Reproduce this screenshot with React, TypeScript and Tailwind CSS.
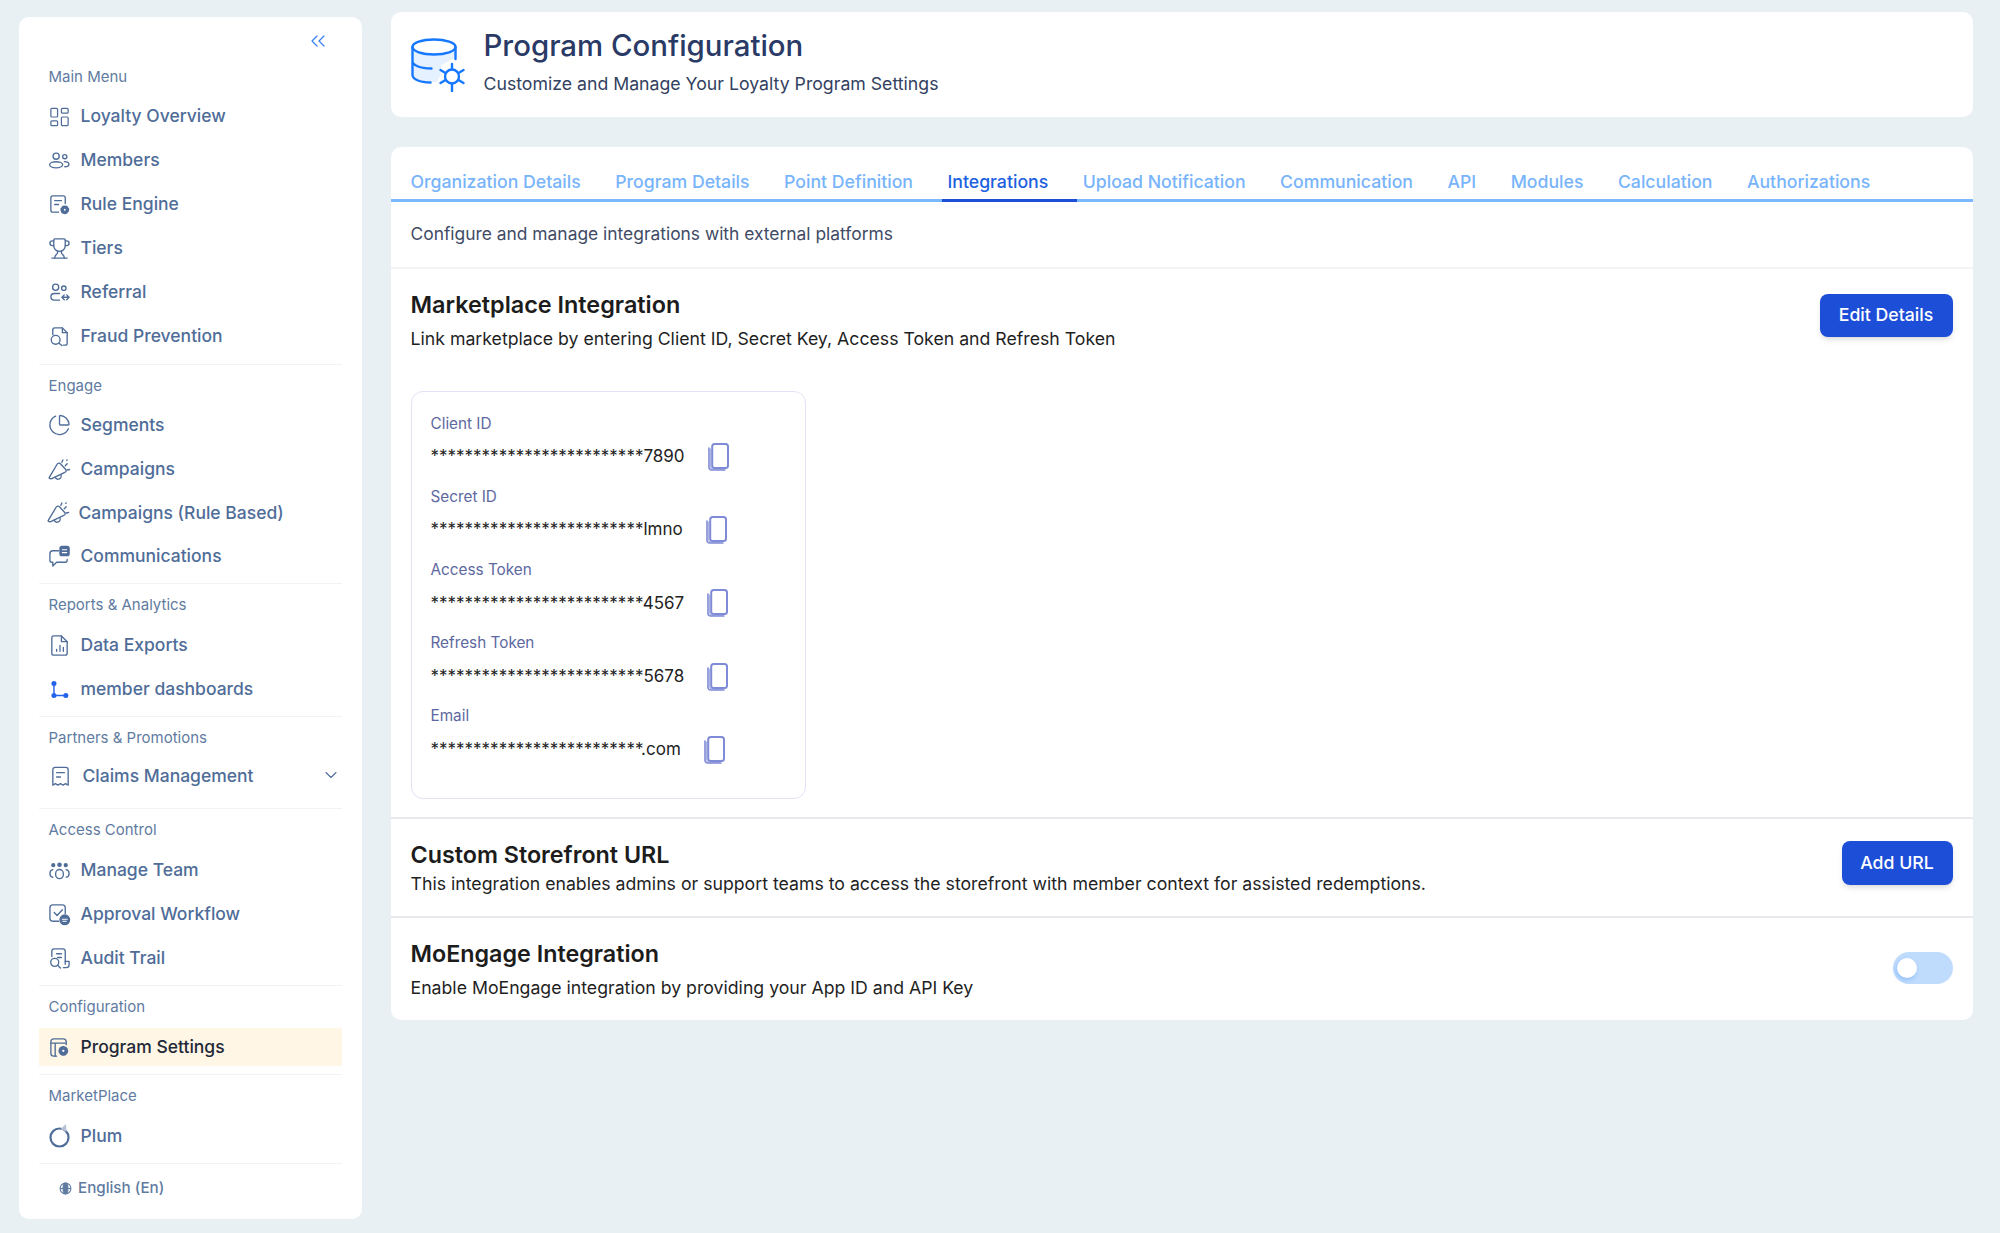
import type { ReactNode } from "react";
import { ChevronDown, ChevronsLeft, LayoutDashboard, PieChart, Trophy } from "lucide-react";

function Ico({ children, className = "" }: { children: ReactNode; className?: string }) {
  return (
    <svg
      viewBox="0 0 24 24"
      fill="none"
      stroke="currentColor"
      strokeWidth={1.4}
      strokeLinecap="round"
      strokeLinejoin="round"
      className={`h-[23px] w-[23px] shrink-0 ${className}`}
    >
      {children}
    </svg>
  );
}

const icons: Record<string, ReactNode> = {
  overview: <LayoutDashboard className="h-[24px] w-[24px]" strokeWidth={1.3} />,
  members: (
    <Ico>
      <circle cx="8.500" cy="7.500" r="3.200" />
      <circle cx="17.500" cy="8" r="2.200" />
      <ellipse cx="8.500" cy="16.500" rx="6.800" ry="3.200" />
      <path d="M17 13.200c2.700 0 4.800 1 4.800 2.600S19.700 18.500 17.500 18.500" />
    </Ico>
  ),
  rules: (
    <Ico>
      <path d="M11 20H5a2 2 0 0 1-2-2V5a2 2 0 0 1 2-2h11a2 2 0 0 1 2 2v6" />
      <path d="M7 8h7M7 12h4" />
      <circle cx="17.500" cy="17.500" r="3.600" fill="currentColor" strokeWidth={2} strokeDasharray="2 1.500" />
      <circle cx="17.500" cy="17.500" r="1" fill="white" stroke="none" />
    </Ico>
  ),
  tiers: <Trophy className="h-[23px] w-[23px]" strokeWidth={1.4} />,
  referral: (
    <Ico>
      <circle cx="8" cy="6.500" r="3.200" />
      <circle cx="16.500" cy="7.500" r="2.300" />
      <path d="M12 20H6.500a3.500 3.500 0 0 1 0-7H12" />
      <path d="M15 17h7M19.500 14.500 22 17l-2.500 2.500M17 14.500 14.500 17l2.500 2.500" />
    </Ico>
  ),
  fraud: (
    <Ico>
      <path d="M5 10V5a2 2 0 0 1 2-2h8l5 5v11a2 2 0 0 1-2 2h-2" />
      <path d="M15 3v5h5" />
      <circle cx="8" cy="15.500" r="4.600" />
      <path d="m11.500 19 3 2.500" />
    </Ico>
  ),
  segments: <PieChart className="h-[24px] w-[24px]" strokeWidth={1.4} />,
  campaigns: (
    <Ico>
      <path d="M1.500 20 9.500 6.500c1-1.500 2.500-1.500 3.500-.5l5.500 6c1 1 .5 2.500-1 3L4 21.500c-2 .5-3.500-.5-2.500-1.500z" />
      <path d="M7.500 20a3.200 3.200 0 0 0 6-2.500" />
      <path d="M14.500 4.500l1-2.500M18 8l2-2M20 12.500l2.500-.5M19.500 2.500l.5-.5" />
    </Ico>
  ),
  comms: (
    <Ico>
      <path d="M11 6H5a3 3 0 0 0-3 3v7a2 2 0 0 0 2 2h1v4l4-4h9a2 2 0 0 0 2-2v-1" />
      <rect x="12.500" y="1.500" width="9.500" height="9.500" rx="2" fill="currentColor" />
      <path d="M15 5h4.500M15 8h4.500" stroke="white" strokeWidth={1.200} />
    </Ico>
  ),
  exports: (
    <Ico>
      <path d="M14 2H6a2 2 0 0 0-2 2v16a2 2 0 0 0 2 2h12a2 2 0 0 0 2-2V8z" />
      <path d="M14 2v6h6" />
      <path d="M9 18v-2M12.500 18v-6M16 18v-4" />
    </Ico>
  ),
  dashboards: (
    <svg viewBox="0 0 24 24" className="h-[19px] w-[19px] shrink-0 text-[#2563eb]" fill="currentColor" stroke="currentColor">
      <circle cx="5" cy="4.500" r="3.200" stroke="none" />
      <circle cx="5" cy="19.500" r="3.200" stroke="none" />
      <circle cx="20" cy="19.500" r="3.200" stroke="none" />
      <path d="M5 4.500V19.500H20" strokeWidth={1.800} fill="none" />
    </svg>
  ),
  claims: (
    <Ico>
      <path d="M4 21V5a2.500 2.500 0 0 1 2.500-2.500h11A2.500 2.500 0 0 1 20 5v16l-2.700-1.500L14.700 21 12 19.500 9.300 21l-2.600-1.500z" />
      <path d="M8 8h8M8 12.500h4" />
    </Ico>
  ),
  team: (
    <Ico>
      <rect x="8" y="11" width="8" height="9.500" rx="4" />
      <circle cx="12" cy="6" r="1.700" fill="currentColor" />
      <circle cx="5.500" cy="6.500" r="1.500" fill="currentColor" />
      <circle cx="18.500" cy="6.500" r="1.500" fill="currentColor" />
      <path d="M5 11c-2 .5-3 2-3 4s1 3.500 3 4M19 11c2 .5 3 2 3 4s-1 3.500-3 4" />
    </Ico>
  ),
  approval: (
    <Ico>
      <path d="M11 19H5a3 3 0 0 1-3-3V5a3 3 0 0 1 3-3h10a3 3 0 0 1 3 3v6" />
      <path d="m6.500 10 3 3 5.500-6" />
      <circle cx="17.500" cy="17.500" r="5" fill="currentColor" />
      <path d="M15 17h5M15.500 19h3.500" stroke="white" strokeWidth={1.200} />
    </Ico>
  ),
  audit: (
    <Ico>
      <path d="M4 10V4.500A2.500 2.500 0 0 1 6.500 2h9A2.500 2.500 0 0 1 18 4.500V18" />
      <path d="M9 7h5M10 11h4" />
      <circle cx="7" cy="16" r="4.200" />
      <path d="m10 19 3 3" />
      <path d="M18 15h4v3.500a3 3 0 0 1-3 3h-3" />
    </Ico>
  ),
  settings: (
    <Ico>
      <path d="M9 21H6a3 3 0 0 1-3-3V6a3 3 0 0 1 3-3h10a3 3 0 0 1 3 3v3" />
      <path d="M3 7.500h16M7.500 21V8" />
      <circle cx="16" cy="15.500" r="4" fill="currentColor" strokeWidth={2.200} strokeDasharray="2 1.500" />
      <circle cx="16" cy="15.500" r="1.200" fill="white" stroke="none" />
    </Ico>
  ),
  plum: (
    <svg viewBox="0 0 24 24" className="h-[24px] w-[24px] shrink-0" fill="none">
      <circle cx="11.500" cy="13.500" r="9" stroke="currentColor" strokeWidth={2.200} />
      <path d="M12.500 5 18 0l.5 8z" fill="#b6c2d4" />
    </svg>
  ),
};

type Item = { label: string; icon: string; tight?: boolean };

function NavRow({ item, rowClass }: { item: Item; rowClass: string }) {
  return (
    <a className={`flex items-center pl-[9px] text-[17.500px] font-medium text-[#4f6d98] ${rowClass}`}>
      <span className={`flex w-[23px] justify-center ${item.tight ? "-translate-x-[1px]" : ""}`}>{icons[item.icon]}</span>
      <span className={item.tight ? "ml-[7.500px]" : "ml-[9.500px]"}>{item.label}</span>
    </a>
  );
}

function Section({
  label,
  items,
  first,
  rowClass = "h-[44px]",
}: {
  label: string;
  items: Item[];
  first?: boolean;
  rowClass?: string;
}) {
  return (
    <section className={`border-b border-[#f1f3f6] pb-[5px] ${first ? "" : "pt-[11px]"}`}>
      <h3 className="mb-[8px] h-[20px] pl-[9.500px] text-[15px] leading-[20px] text-[#5f7ba1]">{label}</h3>
      {items.map((item) => (
        <NavRow key={item.label} item={item} rowClass={rowClass} />
      ))}
    </section>
  );
}

function Sidebar() {
  return (
    <aside className="flex h-[1202px] w-[343px] shrink-0 flex-col rounded-[10px] bg-white px-[20px]">
      <div className="flex h-[49.500px] shrink-0 items-start justify-end pt-[12px] pr-[12px] text-[#3b82f6]">
        <ChevronsLeft className="h-[24px] w-[24px]" strokeWidth={1.300} />
      </div>
      <Section
        first
        label="Main Menu"
        items={[
          { label: "Loyalty Overview", icon: "overview" },
          { label: "Members", icon: "members" },
          { label: "Rule Engine", icon: "rules" },
          { label: "Tiers", icon: "tiers" },
          { label: "Referral", icon: "referral" },
          { label: "Fraud Prevention", icon: "fraud" },
        ]}
      />
      <Section
        label="Engage"
        rowClass="h-[43.700px]"
        items={[
          { label: "Segments", icon: "segments" },
          { label: "Campaigns", icon: "campaigns" },
          { label: "Campaigns (Rule Based)", icon: "campaigns", tight: true },
          { label: "Communications", icon: "comms" },
        ]}
      />
      <Section
        label="Reports & Analytics"
        items={[
          { label: "Data Exports", icon: "exports" },
          { label: "member dashboards", icon: "dashboards" },
        ]}
      />

      <section className="h-[92px] border-b border-[#f1f3f6] pt-[11px]">
        <h3 className="mb-[6px] h-[20px] pl-[9.500px] text-[15px] leading-[20px] text-[#5f7ba1]">Partners &amp; Promotions</h3>
        <div className="flex h-[44px] items-center pl-[10px] text-[17.500px] font-medium text-[#4f6d98]">
          <span className="flex w-[23px] justify-center">{icons.claims}</span>
          <span className="ml-[10.500px] flex-1">Claims Management</span>
          <ChevronDown className="mr-[1px] mb-[3px] h-[20px] w-[20px]" strokeWidth={1.300} />
        </div>
      </section>

      <Section
        label="Access Control"
        items={[
          { label: "Manage Team", icon: "team" },
          { label: "Approval Workflow", icon: "approval" },
          { label: "Audit Trail", icon: "audit" },
        ]}
      />

      <section className="h-[89px] border-b border-[#f1f3f6] pt-[11px]">
        <h3 className="mb-[11px] h-[20px] pl-[9.500px] text-[15px] leading-[20px] text-[#5f7ba1]">Configuration</h3>
        <div className="flex h-[38px] items-center bg-[#fff6e5] pl-[9px] text-[17.500px] font-medium text-[#1f2937]">
          <span className="flex w-[23px] justify-center text-[#4f6d98]">{icons.settings}</span>
          <span className="ml-[9.500px]">Program Settings</span>
        </div>
      </section>

      <Section label="MarketPlace" items={[{ label: "Plum", icon: "plum" }]} />

      <div className="flex flex-1 items-center pb-[7px] pl-[20px] text-[15.200px] font-medium text-[#5f7ba1]">
        <svg viewBox="0 0 24 24" className="mr-[6px] h-[13px] w-[13px]" fill="none" stroke="currentColor" strokeWidth={2}>
          <circle cx="12" cy="12" r="10" />
          <ellipse cx="12" cy="12" rx="4.500" ry="10" fill="currentColor" />
          <path d="M2 12h20" />
        </svg>
        English (En)
      </div>
    </aside>
  );
}

function CopyIcon() {
  return (
    <svg viewBox="0 0 21 28" className="h-[28px] w-[21px] shrink-0 text-[#7f8bd6]" fill="none" stroke="currentColor">
      <rect x="4.200" y="1" width="15.800" height="24" rx="2.500" strokeWidth={2} />
      <path d="M1 5v19.500A2.500 2.500 0 0 0 3.500 27H17" strokeWidth={1.600} strokeLinecap="round" />
      <path d="M2.700 6v18a2 2 0 0 0 2 2h11" strokeWidth={0.800} strokeLinecap="round" />
    </svg>
  );
}

const tabs = [
  "Organization Details",
  "Program Details",
  "Point Definition",
  "Integrations",
  "Upload Notification",
  "Communication",
  "API",
  "Modules",
  "Calculation",
  "Authorizations",
];

const credentials = [
  { label: "Client ID", value: "*************************7890", gap: "ml-[23px]" },
  { label: "Secret ID", value: "*************************lmno", gap: "ml-[23px]" },
  { label: "Access Token", value: "*************************4567", gap: "ml-[23px]" },
  { label: "Refresh Token", value: "*************************5678", gap: "ml-[23px]" },
  { label: "Email", value: "*************************.com", gap: "ml-[23px]" },
];

function BlueButton({ children, className = "" }: { children: ReactNode; className?: string }) {
  return (
    <button className={`rounded-[8px] bg-[#1d4ed8] text-[17.700px] font-medium text-white shadow-md ${className}`}>
      {children}
    </button>
  );
}

export default function App() {
  return (
    <div className="flex min-h-[1233px] items-start gap-[29px] bg-[#e8f0f3] pt-[12px] pl-[19px] [font-family:Inter,sans-serif]">
      <div className="pt-[5px]">
        <Sidebar />
      </div>

      <main className="w-[1582px] shrink-0">
        <header className="flex h-[105px] items-center rounded-[10px] bg-white pl-[20px]">
          <svg viewBox="0 0 54 54" className="h-[54px] w-[54px] shrink-0 text-[#1677ff]" fill="none" stroke="currentColor" strokeWidth={2.400} strokeLinecap="round">
            <path d="M1.500 9v27c0 5 9 8 21 8h3l4-6 1-11 15-8V9z" fill="#e6f1ff" stroke="none" />
            <ellipse cx="23" cy="9" rx="21.500" ry="7.500" fill="white" />
            <path d="M1.500 9v28c0 4 7 7.500 18 7.500M44.500 9v12M1.500 23c0 4 7 7.500 19 7.500" />
            <circle cx="41" cy="38.500" r="7" fill="white" />
            <path d="M41 26v5M41 46v7M29.500 32l5 3M47.500 42l5 3M29.500 45l5-3M47.500 35l5-3" />
          </svg>
          <div className="ml-[18.500px] -translate-y-[3px]">
            <h1 className="text-[29.400px] leading-[36px] font-medium text-[#2a3a66]">Program Configuration</h1>
            <p className="mt-[8px] text-[17.700px] leading-[24px] text-[#33415f]">Customize and Manage Your Loyalty Program Settings</p>
          </div>
        </header>

        <div className="mt-[30px] h-[873px] rounded-[10px] bg-white">
          <nav className="flex h-[55px] items-end border-b-[3px] border-[#7ab8ff] pl-[13.500px]">
            {tabs.map((tab) => (
              <a
                key={tab}
                className={
                  tab === "Integrations"
                    ? "-mb-[3px] border-b-[3px] border-[#1d4ed8] pr-[28.500px] pb-[5px] pl-[6px] text-[17.680px] leading-[24px] font-medium text-[#1d5fe0]"
                    : "-mb-[3px] border-b-[3px] border-transparent pr-[28.500px] pb-[5px] pl-[6px] text-[17.680px] leading-[24px] font-medium text-[#78b4fb]"
                }
              >
                {tab}
              </a>
            ))}
          </nav>

          <p className="flex h-[67px] items-center border-b-2 border-[#f2f4f5] px-[19.500px] text-[17.400px] text-[#414b66]">
            Configure and manage integrations with external platforms
          </p>

          <section className="h-[550px] border-b-2 border-[#e7e9ec] pt-[22px] pr-[20.500px] pl-[19.500px]">
            <div className="flex items-start justify-between">
              <div>
                <h2 className="text-[23.400px] leading-[28px] font-semibold text-[#1c1c1c]">Marketplace Integration</h2>
                <p className="mt-[7px] text-[17.700px] leading-[26px] text-[#1f1f1f]">
                  Link marketplace by entering Client ID, Secret Key, Access Token and Refresh Token
                </p>
              </div>
              <BlueButton className="mt-[3px] h-[43px] w-[133px]">Edit Details</BlueButton>
            </div>

            <div className="mt-[38.500px] h-[408px] w-[395px] rounded-[12px] border border-[#e1e3f5] px-[19px] pt-[20px]">
              {credentials.map((c) => (
                <div key={c.label} className="mb-[12.200px]">
                  <div className="h-[24px] text-[15.300px] leading-[24px] text-[#5d689f]">{c.label}</div>
                  <div className="mt-[6px] flex h-[31px] items-center text-[17px] text-[#222222]">
                    <span>{c.value}</span>
                    <span className={c.gap}>
                      <CopyIcon />
                    </span>
                  </div>
                </div>
              ))}
            </div>
          </section>

          <section className="flex h-[99px] items-start justify-between border-b-2 border-[#e7e9ec] pt-[22px] pr-[20.500px] pl-[19.500px]">
            <div>
              <h2 className="text-[23.300px] leading-[28px] font-semibold text-[#1c1c1c]">Custom Storefront URL</h2>
              <p className="mt-[2px] text-[17.700px] leading-[26px] text-[#1f1f1f]">
                This integration enables admins or support teams to access the storefront with member context for assisted redemptions.
              </p>
            </div>
            <BlueButton className="h-[44px] w-[111px]">Add URL</BlueButton>
          </section>

          <section className="flex items-start justify-between pt-[22px] pr-[20.500px] pl-[19.500px]">
            <div>
              <h2 className="text-[23.300px] leading-[28px] font-semibold text-[#1c1c1c]">MoEngage Integration</h2>
              <p className="mt-[7px] text-[17.700px] leading-[26px] text-[#1f1f1f]">
                Enable MoEngage integration by providing your App ID and API Key
              </p>
            </div>
            <span className="mt-[12px] flex h-[32px] w-[60px] items-center rounded-full bg-[#bfdcfd] pl-[4px]">
              <span className="h-[20px] w-[20px] rounded-full bg-white shadow-[-1px_2px_4px_rgba(59,130,246,0.35)]" />
            </span>
          </section>
        </div>
      </main>
    </div>
  );
}
